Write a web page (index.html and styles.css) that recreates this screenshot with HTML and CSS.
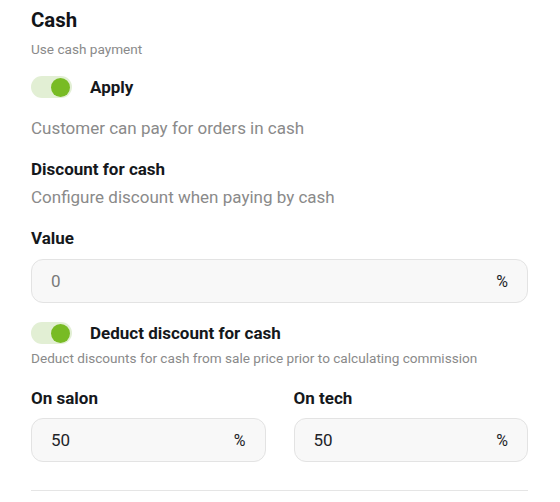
FILE: index.html
```html
<!DOCTYPE html>
<html lang="en">
<head>
<meta charset="utf-8">
<link rel="stylesheet" href="styles.css">
</head>
<body>
<div class="page">
  <h1 class="title">Cash</h1>
  <p class="sub">Use cash payment</p>

  <div class="toggle-row row-apply">
    <span class="toggle"><span class="knob"></span></span>
    <span class="toggle-label">Apply</span>
  </div>

  <p class="desc desc-customer">Customer can pay for orders in cash</p>

  <h2 class="section">Discount for cash</h2>
  <p class="desc desc-config">Configure discount when paying by cash</p>

  <label class="label label-value">Value</label>
  <div class="field field-value">
    <span class="val placeholder">0</span>
    <span class="unit">%</span>
  </div>

  <div class="toggle-row row-deduct">
    <span class="toggle"><span class="knob"></span></span>
    <span class="toggle-label">Deduct discount for cash</span>
  </div>
  <p class="sub sub-deduct">Deduct discounts for cash from sale price prior to calculating commission</p>

  <div class="split">
    <div class="col">
      <label class="label">On salon</label>
      <div class="field">
        <span class="val">50</span>
        <span class="unit">%</span>
      </div>
    </div>
    <div class="col">
      <label class="label">On tech</label>
      <div class="field">
        <span class="val">50</span>
        <span class="unit">%</span>
      </div>
    </div>
  </div>

  <div class="divider"></div>
</div>
</body>
</html>
```

FILE: styles.css
```css
* { box-sizing: border-box; }
html, body { margin: 0; padding: 0; background: #ffffff; }
body {
  font-family: Roboto, "Liberation Sans", Arial, sans-serif;
  color: #1b1d21;
}
.page {
  padding: 8px 32px 0 31px;
  display: flex;
  flex-direction: column;
}
.title {
  margin: 0;
  font-size: 20.4px;
  line-height: 24px;
  font-weight: 700;
  color: #111418;
}
.sub {
  margin: 7px 0 0;
  font-size: 13.6px;
  line-height: 20px;
  color: #8a8a8a;
}
.toggle-row {
  display: flex;
  align-items: center;
  height: 22px;
}
.row-apply { margin-top: 17px; }
.row-deduct { margin-top: 19px; }
.toggle {
  width: 41px;
  height: 22px;
  border-radius: 11px;
  background: #e2efd4;
  display: flex;
  align-items: center;
  justify-content: flex-end;
  padding-right: 2px;
}
.knob {
  width: 19px;
  height: 19px;
  border-radius: 50%;
  background: #78bb24;
}
.toggle-label {
  margin-left: 18px;
  font-size: 17px;
  font-weight: 700;
  color: #15181c;
}
.desc {
  margin: 0;
  font-size: 17px;
  line-height: 24px;
  color: #8a8a8a;
}
.desc-customer { margin-top: 18px; }
.desc-config { margin-top: 4px; }
.section {
  margin: 17px 0 0;
  font-size: 17px;
  line-height: 24px;
  font-weight: 700;
  color: #15181c;
}
.label {
  display: block;
  font-size: 17px;
  line-height: 24px;
  font-weight: 700;
  color: #15181c;
}
.label-value { margin-top: 17px; }
.field {
  margin-top: 9px;
  height: 44px;
  border: 1px solid #e3e3e3;
  border-radius: 12px;
  background: #f8f8f8;
  display: flex;
  align-items: center;
  justify-content: space-between;
  padding: 0 19px 0 19px;
  font-size: 17px;
}
.field-value { margin-top: 9px; }
.val { color: #222428; }
.val.placeholder { color: #7a7a7a; }
.unit { color: #222428; font-size: 16px; }
.sub-deduct { margin-top: 4px; }
.split {
  margin-top: 18px;
  display: grid;
  grid-template-columns: 1fr 1fr;
  column-gap: 28px;
}
.split .field { margin-top: 8px; }
.divider {
  margin-top: 28px;
  height: 1px;
  background: #e5e5e5;
}
```
